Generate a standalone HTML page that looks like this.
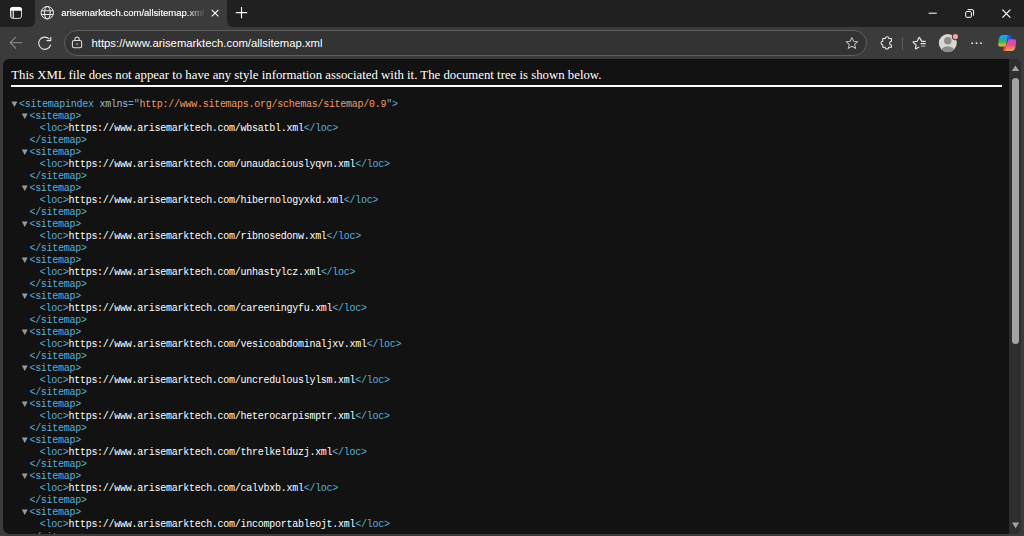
<!DOCTYPE html>
<html><head><meta charset="utf-8"><style>
html,body{margin:0;padding:0;width:1024px;height:536px;overflow:hidden;background:#3b3b3b;}
*{box-sizing:border-box;}
.a{position:absolute;}
#strip{left:0;top:0;width:1024px;height:27px;background:#202020;}
#tabbg{left:28px;top:0;width:206px;height:27px;background:#3b3b3b;border-radius:7px 7px 0 0;}
#sl{left:-20px;top:-20px;width:55px;height:47px;background:#202020;border-radius:0 0 6px 0;}
#sr{left:227px;top:-20px;width:820px;height:47px;background:#202020;border-radius:0 0 0 6px;}
#tab{left:35px;top:0;width:192px;height:30px;background:#3b3b3b;border-radius:7px 7px 0 0;}
#toolbar{left:0;top:27px;width:1024px;height:32px;background:#3b3b3b;}
#addr{left:64px;top:30px;width:803px;height:26px;border:1px solid #5e5e5e;border-radius:13px;background:#333333;}
#url{left:91.5px;top:36px;font:11.3px "Liberation Sans",sans-serif;color:#fff;white-space:pre;line-height:14px;}
#tabtitle{left:61.2px;top:5.9px;font:9.5px "Liberation Sans",sans-serif;color:#fff;white-space:pre;line-height:14px;width:145px;overflow:hidden;
  -webkit-mask-image:linear-gradient(to right,#000 125px,transparent 145px);-webkit-text-stroke:0.15px #fff;}
#content{left:3px;top:59px;width:1018px;height:475px;background:#121212;border-radius:6px 7px 7px 7px;overflow:hidden;}
#track{left:1006.3px;top:0;width:12px;height:475px;background:#2e2e2e;}
#thumb{left:1008.8px;top:18.5px;width:7.4px;height:266.7px;background:#a3a3a3;border-radius:3.7px;}
#upar{left:1008.3px;top:6.4px;width:0;height:0;border-left:3.75px solid transparent;border-right:3.75px solid transparent;border-bottom:5.4px solid #a3a3a3;}
#dnar{left:1008.6px;top:463.4px;width:0;height:0;border-left:3.6px solid transparent;border-right:3.6px solid transparent;border-top:5.7px solid #a3a3a3;}
#hdr{left:8.3px;top:8.7px;font:12.8px "Liberation Serif",serif;color:#fff;white-space:pre;line-height:15px;}
#hr{left:8.3px;top:26px;width:990.8px;height:1.8px;background:#fff;}
.ln{position:absolute;font:10px "Liberation Mono",monospace;letter-spacing:-0.264px;color:#fff;white-space:pre;line-height:12px;}
.t{color:#5db0d7;} .an{color:#9bbbdc;} .av{color:#f29766;}
.tri{position:absolute;}
svg{position:absolute;overflow:visible;}
</style></head><body>
<div class="a" id="strip"></div>
<div class="a" id="toolbar"></div>
<div class="a" id="tabbg"></div>
<div class="a" id="sl"></div>
<div class="a" id="sr"></div>
<div class="a" id="tab"></div>
<div class="a" id="addr"></div>
<div class="a" id="tabtitle">arisemarktech.com/allsitemap.xml</div>
<div class="a" id="url">https://www.arisemarktech.com/allsitemap.xml</div>

<!-- sidebar icon -->
<svg style="left:0;top:0" width="40" height="27"><g fill="none" stroke="#dcdcdc" stroke-width="1">
<rect x="10.5" y="7.4" width="11" height="11" rx="2.4"/></g>
<path d="M10 10.8 V9.6 Q10 6.9 12.7 6.9 H19.3 Q22 6.9 22 9.6 V10.8 Z" fill="#ffffff"/>
<rect x="12.9" y="10.6" width="1" height="7.8" fill="#e0e0e0"/>
<rect x="11" y="10.8" width="1.9" height="7.2" fill="#ffffff" opacity="0.3"/>
</svg>
<!-- globe -->
<svg style="left:0;top:0" width="60" height="27" opacity="0.9"><g fill="none" stroke="#ffffff" stroke-width="1">
<circle cx="47.3" cy="12.7" r="6.2"/>
<ellipse cx="47.3" cy="12.7" rx="2.9" ry="6.2"/>
<line x1="41.4" y1="10.8" x2="53.2" y2="10.8"/>
<line x1="41.4" y1="14.5" x2="53.2" y2="14.5"/>
</g></svg>
<!-- tab close + new tab -->
<svg style="left:0;top:0" width="260" height="27"><g fill="none" stroke="#ffffff" stroke-width="1.1">
<path d="M211.8 9.8 L218.4 16.4 M218.4 9.8 L211.8 16.4"/>
<path d="M241.5 6.9 V18.3 M235.8 12.6 H247.2"/>
</g></svg>
<!-- window controls -->
<svg style="left:0;top:0" width="1024" height="27"><g fill="none" stroke="#ffffff" stroke-width="1">
<path d="M928.6 13.2 H936.8"/>
<rect x="965.7" y="11.6" width="5.7" height="5.7" rx="1"/>
<path d="M967.6 9.6 H972.2 Q973.6 9.6 973.6 11 V15.6"/>
<path d="M1002.4 9.6 L1010.4 17.6 M1010.4 9.6 L1002.4 17.6" stroke-width="1.15"/>
</g></svg>
<!-- back & refresh -->
<svg style="left:0;top:0" width="60" height="60"><g fill="none" stroke-linecap="round" stroke-linejoin="round">
<path d="M15.6 37.4 L10.2 42.7 L15.6 48.1 M10.4 42.7 H21.8" stroke="#8c8c8c" stroke-width="1.05"/>
<g transform="translate(0.4 0.4)"><path d="M50.2 44.6 A6.1 6.1 0 1 1 48.6 38.4" stroke="#e6e6e6" stroke-width="1.1"/>
<path d="M50.3 36.8 V40.2 H46.6" stroke="#e6e6e6" stroke-width="1.1"/></g>
</g></svg>
<!-- lock -->
<svg style="left:0;top:0" width="100" height="60"><g fill="none" stroke="#e0e0e0" stroke-width="1.05">
<rect x="72.4" y="40.4" width="9.3" height="7.3" rx="1.8"/>
<path d="M74.95 40.3 V39.1 A2.1 2.1 0 0 1 79.15 39.1 V40.3"/>
</g><rect x="76.4" y="43.4" width="1.3" height="1.3" fill="#e0e0e0"/></svg>
<!-- star in address bar -->
<svg style="left:0;top:0" width="870" height="60"><path d="M851.9 37.6 L853.6 41.3 L857.7 41.7 L854.6 44.4 L855.5 48.4 L851.9 46.3 L848.3 48.4 L849.2 44.4 L846.1 41.7 L850.2 41.3 Z" fill="none" stroke="#bdbdbd" stroke-width="1.05" stroke-linejoin="round"/></svg>
<!-- puzzle -->
<svg style="left:0;top:0" width="900" height="60"><path d="M882.8 38.5 H885.3 A1.8 1.8 0 0 1 888.9 38.5 H891.4 V41.4 A1.75 1.75 0 0 0 891.4 44.9 V47.3 H888.7 A1.8 1.8 0 0 1 885.1 47.3 H882.8 V44.9 A1.8 1.8 0 0 1 882.8 41.3 Z" fill="none" stroke="#ececec" stroke-width="1.05" stroke-linejoin="round"/></svg>
<!-- separator -->
<div class="a" style="left:902px;top:36.8px;width:1px;height:12.8px;background:#5a5a5a"></div>
<!-- favorites -->
<svg style="left:0;top:0" width="940" height="60"><g fill="none" stroke="#e8e8e8" stroke-width="1.15" stroke-linejoin="round" stroke-linecap="round">
<path d="M925.3 41.4 H921.7 L919.6 37.6 Q919.2 37 918.9 37.6 L917.2 41.2 L913.5 41.7 Q912.8 41.9 913.3 42.4 L916.1 45 L915.4 48.4 Q915.3 49.1 915.9 48.8 L918.8 47.2"/>
<path d="M921 43.6 H925.3"/>
</g><path d="M920.9 46.1 H925.4" stroke="#9a9a9a" stroke-width="1.3"/></svg>
<!-- avatar -->
<svg style="left:0;top:0" width="970" height="60">
<defs><clipPath id="av"><circle cx="947.8" cy="43.1" r="9"/></clipPath></defs>
<circle cx="947.8" cy="43.1" r="9" fill="#d9d7d4"/>
<g clip-path="url(#av)"><circle cx="947.8" cy="40.7" r="3.75" fill="#8e8c8a"/>
<ellipse cx="947.8" cy="52.6" rx="7.2" ry="6.4" fill="#8e8c8a"/></g>
<circle cx="955.4" cy="36.6" r="3.6" fill="#3b3b3b"/>
<circle cx="955.4" cy="36.6" r="2.6" fill="#f4a3a3"/>
</svg>
<!-- more dots -->
<svg style="left:0;top:0" width="1000" height="60"><g fill="#f0f0f0">
<circle cx="972.2" cy="43.2" r="0.9"/><circle cx="976.6" cy="43.2" r="0.9"/><circle cx="981" cy="43.2" r="0.9"/></g></svg>
<!-- copilot -->
<svg style="left:0;top:0" width="1024" height="60">
<defs>
<linearGradient id="cg1" x1="0" y1="0" x2="0" y2="1"><stop offset="0" stop-color="#12a6f7"/><stop offset="0.3" stop-color="#1e9fd8"/><stop offset="0.6" stop-color="#44b05a"/><stop offset="1" stop-color="#f0c80c"/></linearGradient>
<linearGradient id="cg2" x1="0" y1="0" x2="0" y2="1"><stop offset="0" stop-color="#b54ef0"/><stop offset="0.5" stop-color="#e8508a"/><stop offset="1" stop-color="#ffa552"/></linearGradient>
<linearGradient id="cg3" x1="0" y1="0" x2="1" y2="0"><stop offset="0" stop-color="#1b6fe0"/><stop offset="1" stop-color="#1438c8"/></linearGradient>
</defs>
<path d="M1002.8 35 H1008.2 L1005.5 46.4 H999.8 Q998.1 46.4 998.2 44.8 L998.8 39.5 Q999.5 35 1002.8 35 Z" fill="url(#cg1)"/>
<path d="M1007.6 35 H1010 Q1011.4 35 1011.9 36.4 L1012.6 39.2 H1008.3 Z" fill="url(#cg3)"/>
<path d="M1008.3 39.2 H1014.2 Q1016.2 39.2 1016.1 41.3 L1015.7 45.6 Q1015.3 51.1 1011.5 51.1 H1004.7 Q1003.2 51.1 1003.5 49.8 L1004.6 46.4 H1005.6 Z" fill="url(#cg2)"/>
<path d="M1003.5 49.8 L1004.6 46.4 H1006.4 L1005.3 51.1 H1004.7 Q1003.2 51.1 1003.5 49.8 Z" fill="#f0562a"/>
</svg>

<div class="a" id="content">
<div class="a" id="hdr">This XML file does not appear to have any style information associated with it. The document tree is shown below.</div>
<div class="a" id="hr"></div>
<div class="a" id="tree" style="left:-3px;top:-59px;width:1024px;height:600px;">
<div class="ln" style="left:19.05px;top:99.20px"><span class="t">&lt;sitemapindex</span> <span class="an">xmlns</span><span class="t">="</span><span class="av">http://www.sitemaps.org/schemas/sitemap/0.9</span><span class="t">"&gt;</span></div>
<div class="ln" style="left:29.40px;top:111.20px"><span class="t">&lt;sitemap&gt;</span></div>
<div class="ln" style="left:39.75px;top:123.20px"><span class="t">&lt;loc&gt;</span>https://www.arisemarktech.com/wbsatbl.xml<span class="t">&lt;/loc&gt;</span></div>
<div class="ln" style="left:29.40px;top:135.20px"><span class="t">&lt;/sitemap&gt;</span></div>
<div class="ln" style="left:29.40px;top:147.20px"><span class="t">&lt;sitemap&gt;</span></div>
<div class="ln" style="left:39.75px;top:159.20px"><span class="t">&lt;loc&gt;</span>https://www.arisemarktech.com/unaudaciouslyqvn.xml<span class="t">&lt;/loc&gt;</span></div>
<div class="ln" style="left:29.40px;top:171.20px"><span class="t">&lt;/sitemap&gt;</span></div>
<div class="ln" style="left:29.40px;top:183.20px"><span class="t">&lt;sitemap&gt;</span></div>
<div class="ln" style="left:39.75px;top:195.20px"><span class="t">&lt;loc&gt;</span>https://www.arisemarktech.com/hibernologyxkd.xml<span class="t">&lt;/loc&gt;</span></div>
<div class="ln" style="left:29.40px;top:207.20px"><span class="t">&lt;/sitemap&gt;</span></div>
<div class="ln" style="left:29.40px;top:219.20px"><span class="t">&lt;sitemap&gt;</span></div>
<div class="ln" style="left:39.75px;top:231.20px"><span class="t">&lt;loc&gt;</span>https://www.arisemarktech.com/ribnosedonw.xml<span class="t">&lt;/loc&gt;</span></div>
<div class="ln" style="left:29.40px;top:243.20px"><span class="t">&lt;/sitemap&gt;</span></div>
<div class="ln" style="left:29.40px;top:255.20px"><span class="t">&lt;sitemap&gt;</span></div>
<div class="ln" style="left:39.75px;top:267.20px"><span class="t">&lt;loc&gt;</span>https://www.arisemarktech.com/unhastylcz.xml<span class="t">&lt;/loc&gt;</span></div>
<div class="ln" style="left:29.40px;top:279.20px"><span class="t">&lt;/sitemap&gt;</span></div>
<div class="ln" style="left:29.40px;top:291.20px"><span class="t">&lt;sitemap&gt;</span></div>
<div class="ln" style="left:39.75px;top:303.20px"><span class="t">&lt;loc&gt;</span>https://www.arisemarktech.com/careeningyfu.xml<span class="t">&lt;/loc&gt;</span></div>
<div class="ln" style="left:29.40px;top:315.20px"><span class="t">&lt;/sitemap&gt;</span></div>
<div class="ln" style="left:29.40px;top:327.20px"><span class="t">&lt;sitemap&gt;</span></div>
<div class="ln" style="left:39.75px;top:339.20px"><span class="t">&lt;loc&gt;</span>https://www.arisemarktech.com/vesicoabdominaljxv.xml<span class="t">&lt;/loc&gt;</span></div>
<div class="ln" style="left:29.40px;top:351.20px"><span class="t">&lt;/sitemap&gt;</span></div>
<div class="ln" style="left:29.40px;top:363.20px"><span class="t">&lt;sitemap&gt;</span></div>
<div class="ln" style="left:39.75px;top:375.20px"><span class="t">&lt;loc&gt;</span>https://www.arisemarktech.com/uncredulouslylsm.xml<span class="t">&lt;/loc&gt;</span></div>
<div class="ln" style="left:29.40px;top:387.20px"><span class="t">&lt;/sitemap&gt;</span></div>
<div class="ln" style="left:29.40px;top:399.20px"><span class="t">&lt;sitemap&gt;</span></div>
<div class="ln" style="left:39.75px;top:411.20px"><span class="t">&lt;loc&gt;</span>https://www.arisemarktech.com/heterocarpismptr.xml<span class="t">&lt;/loc&gt;</span></div>
<div class="ln" style="left:29.40px;top:423.20px"><span class="t">&lt;/sitemap&gt;</span></div>
<div class="ln" style="left:29.40px;top:435.20px"><span class="t">&lt;sitemap&gt;</span></div>
<div class="ln" style="left:39.75px;top:447.20px"><span class="t">&lt;loc&gt;</span>https://www.arisemarktech.com/threlkelduzj.xml<span class="t">&lt;/loc&gt;</span></div>
<div class="ln" style="left:29.40px;top:459.20px"><span class="t">&lt;/sitemap&gt;</span></div>
<div class="ln" style="left:29.40px;top:471.20px"><span class="t">&lt;sitemap&gt;</span></div>
<div class="ln" style="left:39.75px;top:483.20px"><span class="t">&lt;loc&gt;</span>https://www.arisemarktech.com/calvbxb.xml<span class="t">&lt;/loc&gt;</span></div>
<div class="ln" style="left:29.40px;top:495.20px"><span class="t">&lt;/sitemap&gt;</span></div>
<div class="ln" style="left:29.40px;top:507.20px"><span class="t">&lt;sitemap&gt;</span></div>
<div class="ln" style="left:39.75px;top:519.20px"><span class="t">&lt;loc&gt;</span>https://www.arisemarktech.com/incomportableojt.xml<span class="t">&lt;/loc&gt;</span></div>
<div class="ln" style="left:29.40px;top:532.20px"><span class="t">&lt;/sitemap&gt;</span></div><svg style="left:0;top:0" width="1024" height="600"><path fill="#9a9a9a" d="M11.40 101.45 h6 l-3 5.5 Z M21.75 113.45 h6 l-3 5.5 Z M21.75 149.45 h6 l-3 5.5 Z M21.75 185.45 h6 l-3 5.5 Z M21.75 221.45 h6 l-3 5.5 Z M21.75 257.45 h6 l-3 5.5 Z M21.75 293.45 h6 l-3 5.5 Z M21.75 329.45 h6 l-3 5.5 Z M21.75 365.45 h6 l-3 5.5 Z M21.75 401.45 h6 l-3 5.5 Z M21.75 437.45 h6 l-3 5.5 Z M21.75 473.45 h6 l-3 5.5 Z M21.75 509.45 h6 l-3 5.5 Z"/></svg>
</div>
<div class="a" id="track"></div><div class="a" id="thumb"></div>
<svg style="left:0;top:0;position:absolute" width="1024" height="536"><path fill="#a3a3a3" d="M1011.7 70.9 L1015.45 65.4 L1019.2 70.9 Z M1012 522.5 L1019.2 522.5 L1015.6 528.2 Z" transform="translate(-3 -59)"/></svg>

</div>
</body></html>
